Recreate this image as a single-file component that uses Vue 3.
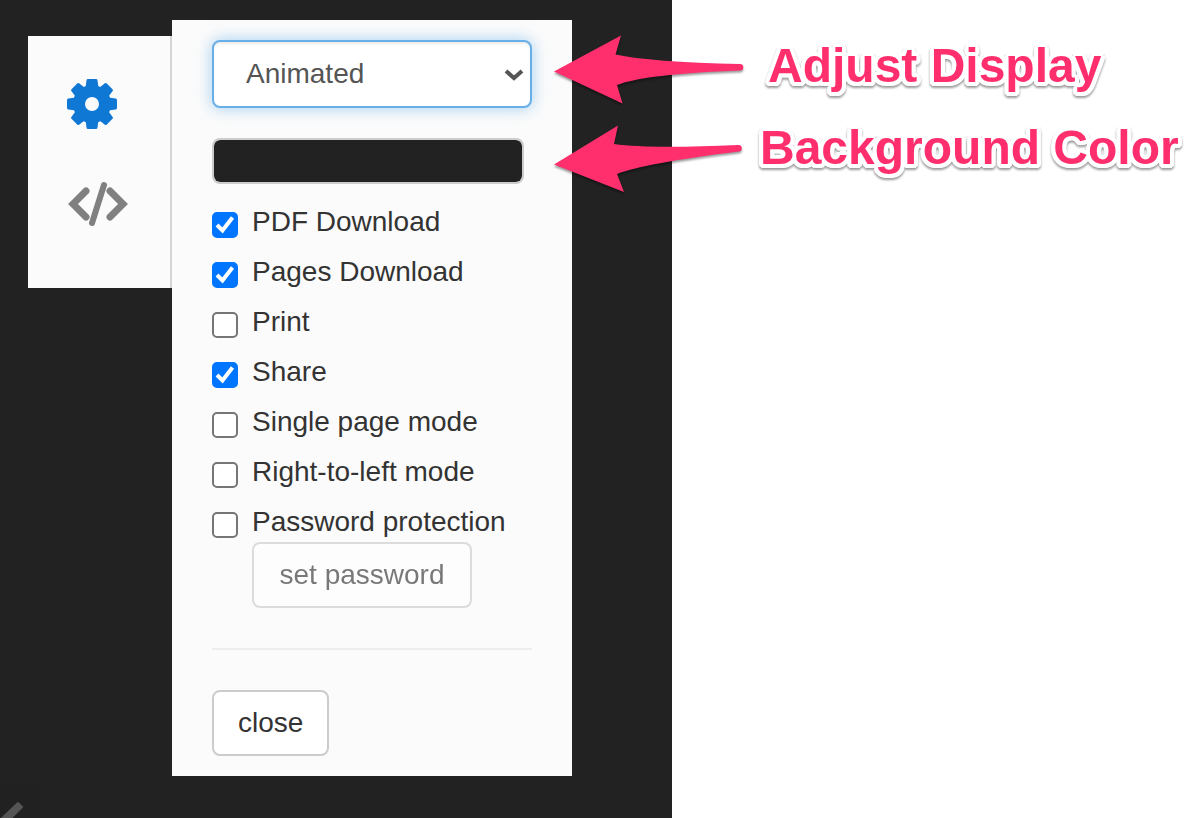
<script setup>
import { ref, reactive } from 'vue'

const display = ref('Animated')
const background = ref('#222222')
const options = reactive([
  { id: 'pdf', label: 'PDF Download', on: true },
  { id: 'pages', label: 'Pages Download', on: true },
  { id: 'print', label: 'Print', on: false },
  { id: 'share', label: 'Share', on: true },
  { id: 'single', label: 'Single page mode', on: false },
  { id: 'rtl', label: 'Right-to-left mode', on: false },
  { id: 'password', label: 'Password protection', on: false },
])
const teeth = [0, 45, 90, 135, 180, 225, 270, 315]
</script>

<template>
  <div class="page">
    <main class="viewer">
      <nav class="tabs">
        <button class="tab" type="button" aria-label="Settings">
          <svg width="52" height="52" viewBox="-26 -26 52 52" aria-hidden="true">
            <g fill="#0f78d4" stroke="#0f78d4" stroke-width="3" stroke-linejoin="round">
              <path
                v-for="angle in teeth"
                :key="angle"
                d="M-5-16 -4-23.500H4L5-16Z"
                :transform="`rotate(${angle})`"
              />
              <circle r="17.500" />
            </g>
            <circle r="7" fill="#fbfbfb" />
          </svg>
        </button>
        <button class="tab code" type="button" aria-label="Embed code">
          <svg width="60" height="48" viewBox="0 0 60 48" fill="none" stroke="#808080" aria-hidden="true">
            <g stroke-width="7" stroke-linecap="round" stroke-linejoin="miter">
              <path d="M18 11 5 24 18 37" />
              <path d="M42 11 55 24 42 37" />
            </g>
            <path d="M36 5 24 43" stroke-width="6" stroke-linecap="round" />
          </svg>
        </button>
      </nav>

      <form class="panel" @submit.prevent>
        <div class="picker">
          <select v-model="display" class="select" aria-label="Display">
            <option>Animated</option>
            <option>Static</option>
          </select>
          <svg class="caret" width="20" height="14" viewBox="0 0 20 14" aria-hidden="true">
            <path d="M2 3 10 10 18 3" fill="none" stroke="#555" stroke-width="4" />
          </svg>
        </div>
        <input v-model="background" class="color" type="color" aria-label="Background color" />

        <ul class="options">
          <li v-for="option in options" :key="option.id">
            <label class="option" :for="option.id">
              <span class="box">
                <input :id="option.id" v-model="option.on" type="checkbox" />
                <svg v-if="option.on" class="tick" viewBox="0 0 26 26" aria-hidden="true">
                  <path d="M5 13 10.500 18.500 20.500 5.500" fill="none" stroke="#fff" stroke-width="4" />
                </svg>
              </span>
              <span>{{ option.label }}</span>
            </label>
          </li>
        </ul>
        <button class="button password" type="button" disabled>set password</button>
        <hr class="rule" />
        <button class="button" type="button">close</button>
      </form>

      <button class="previous" type="button" aria-label="Previous page">
        <svg width="40" height="40" viewBox="0 0 40 40" aria-hidden="true">
          <path d="M19 24 23 28 4 47-2 44Z" transform="translate(-1 1)" fill="#555" stroke="#555" stroke-width="2" stroke-linejoin="round" />
        </svg>
      </button>
    </main>

    <aside class="notes">
      <div class="callouts">
        <svg class="arrows" width="192" height="164" viewBox="552 34 192 164" fill="#ff2f6e" aria-hidden="true">
          <path d="M554 71.500 621 35.500 615.500 54.500Q650 62 740 64A3 3 0 0 1 740 70.500Q645 74 617 85L622.500 103.500Z" />
          <path d="M554 164.500 618 125.500 614 144Q650 149 738 145A3 3 0 0 1 739 151.500Q645 163 617 174L624 192Z" />
        </svg>
        <div class="labels">
          <p class="first">Adjust Display</p>
          <p>Background Color</p>
        </div>
      </div>
    </aside>
  </div>
</template>

<style>
body {
  margin: 0;
  background: #fff;
}
</style>

<style scoped>
.page {
  display: flex;
  min-height: 100vh;
  overflow: hidden;
  font: 28px/40px "Liberation Sans", Arial, sans-serif;
  color: #333;
}
.page *,
.page {
  box-sizing: border-box;
}
.viewer {
  position: relative;
  display: flex;
  align-items: flex-start;
  flex: 0 0 56%;
  min-width: 600px;
  padding: 20px 28px 42px;
  background: #222;
}
.tabs {
  display: flex;
  flex-direction: column;
  align-items: center;
  gap: 50px;
  width: 144px;
  margin-top: 16px;
  padding: 42px 0 60px;
  background: #fbfbfb;
  border-right: 2px solid #d5d5d5;
}
.tab {
  display: block;
  margin-right: 14px;
  padding: 0;
  border: 0;
  background: none;
}
.code {
  margin-right: 2px;
}
.tab svg,
.previous svg {
  display: block;
}
.panel {
  width: 400px;
  padding: 20px 40px;
  background: #fbfbfb;
}
.picker {
  position: relative;
  margin-bottom: 30px;
}
.select {
  display: block;
  width: 100%;
  height: 68px;
  padding: 0 32px;
  appearance: none;
  border: 2px solid #66afe9;
  border-radius: 8px;
  background: #fff;
  box-shadow: inset 0 2px 2px rgba(0, 0, 0, 0.075), 0 0 16px rgba(102, 175, 233, 0.6);
  color: #555;
  font: inherit;
  outline: none;
}
.caret {
  position: absolute;
  top: 28px;
  right: 8px;
  pointer-events: none;
}
.color {
  display: block;
  width: 312px;
  height: 46px;
  margin: 0 0 18px;
  padding: 0;
  appearance: none;
  border: 2px solid #ccc;
  border-radius: 8px;
  background: #ccc;
}
.color::-webkit-color-swatch-wrapper {
  padding: 0;
}
.color::-webkit-color-swatch {
  border: 0;
  border-radius: 6px;
}
.options {
  display: flex;
  flex-direction: column;
  gap: 10px;
  margin: 0;
  padding: 0;
  list-style: none;
}
.option {
  display: flex;
  gap: 14px;
}
.box {
  position: relative;
  width: 26px;
  height: 26px;
  margin-top: 10px;
}
.box input {
  display: block;
  width: 26px;
  height: 26px;
  margin: 0;
  appearance: none;
  border: 2px solid #767676;
  border-radius: 5px;
  background: #fff;
}
.box input:checked {
  border-color: #0075ff;
  background: #0075ff;
}
.tick {
  position: absolute;
  inset: 0;
  pointer-events: none;
}
.button {
  display: block;
  padding: 11px 24px;
  border: 2px solid #ccc;
  border-radius: 8px;
  background: #fff;
  color: #333;
  font: inherit;
}
.password {
  min-width: 220px;
  margin-left: 40px;
  opacity: 0.65;
}
.rule {
  height: 2px;
  margin: 40px 0;
  border: 0;
  background: #eee;
}
.previous {
  position: absolute;
  bottom: 0;
  left: 0;
  padding: 0;
  border: 0;
  background: #212121;
}
.notes {
  position: relative;
  flex: 1;
}
.callouts {
  position: absolute;
  top: 25px;
  left: -120px;
  display: flex;
  align-items: flex-start;
  gap: 16px;
}
.arrows {
  flex: none;
  margin-top: 9px;
  filter: drop-shadow(0 2px 1px rgba(0, 0, 0, 0.4));
}
.labels {
  color: #ff2f6e;
  font-size: 48px;
  font-weight: 700;
  line-height: 82px;
  white-space: nowrap;
  text-shadow:
    4px 0 #fff, -4px 0 #fff, 0 4px #fff, 0 -4px #fff,
    3px 3px #fff, -3px 3px #fff, 3px -3px #fff, -3px -3px #fff,
    4px 2px #fff, -4px 2px #fff, 2px 4px #fff, -2px 4px #fff;
  filter: drop-shadow(0 2px 1px rgba(0, 0, 0, 0.4));
}
.labels p {
  margin: 0;
}
.labels .first {
  padding-left: 8px;
}
</style>
